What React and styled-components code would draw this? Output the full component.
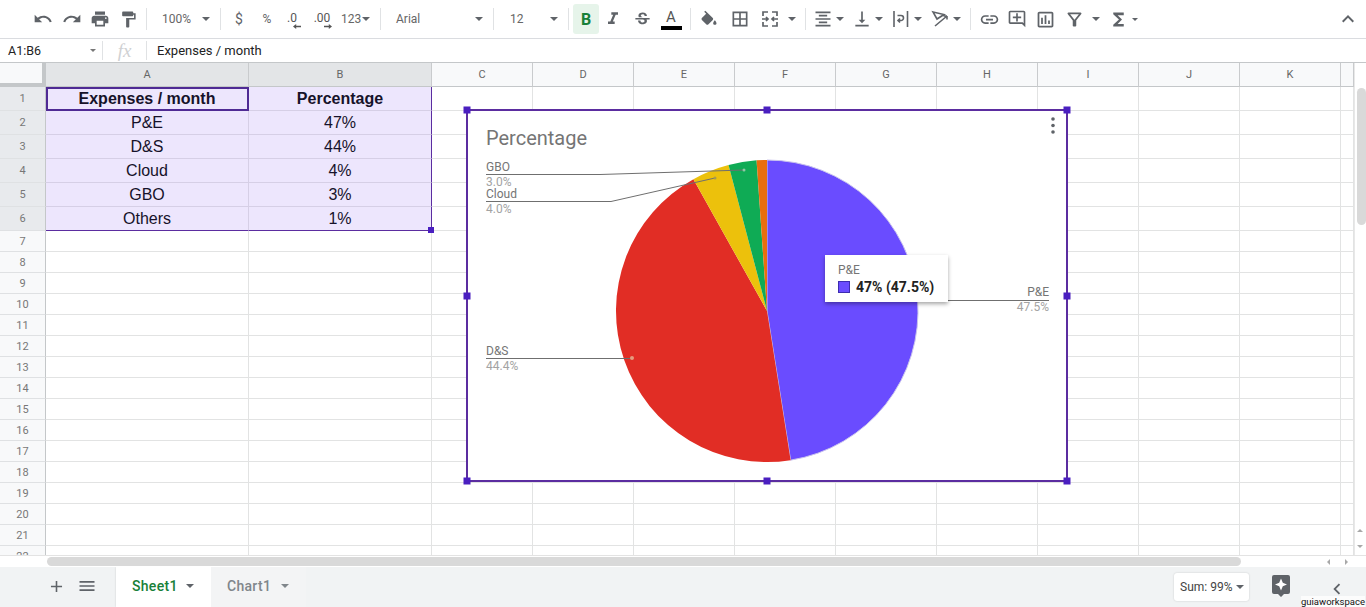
import React from 'react';
import styled, { createGlobalStyle } from 'styled-components';
import {
  MdUndo, MdRedo, MdPrint, MdFormatPaint, MdFormatItalic, MdStrikethroughS,
  MdBorderAll, MdFormatAlignCenter, MdVerticalAlignBottom,
  MdInsertLink, MdOutlineAddComment, MdOutlineInsertChart, MdOutlineFilterAlt,
  MdFunctions, MdExpandLess, MdAdd, MdMenu, MdChevronLeft,
} from 'react-icons/md';

const GlobalStyle = createGlobalStyle`
  html, body {
    margin: 0;
    padding: 0;
    overflow: hidden;
    background: #fff;
    font-family: Roboto, "Liberation Sans", sans-serif;
  }
`;

const Page = styled.div`
  width: 1366px;
  height: 607px;
  display: flex;
  flex-direction: column;
  position: relative;
  overflow: hidden;
`;

/* toolbar */
const Toolbar = styled.div`
  height: 38px;
  flex: none;
  display: flex;
  align-items: center;
  padding: 0 4px 0 29px;
  border-bottom: 1px solid #dadce0;
  color: #5f6368;
`;

const ToolButton = styled.div`
  width: ${p => p.$w || 28}px;
  height: ${p => (p.$active ? 30 : 24)}px;
  flex: none;
  display: flex;
  flex-direction: column;
  align-items: center;
  justify-content: center;
  font-size: ${p => p.$fs || 12}px;
  color: #5f6368;
  background: ${p => (p.$active ? '#e6f4ea' : 'transparent')};
  border-radius: 3px;
  margin-left: ${p => p.$ml || 0}px;
`;

const Sep = styled.div`
  width: 1px;
  height: 22px;
  flex: none;
  margin: 0 4px;
  background: #e0e2e4;
`;

const Select = styled.div`
  width: ${p => p.$w}px;
  padding-left: ${p => p.$pl}px;
  padding-right: 6px;
  box-sizing: border-box;
  flex: none;
  display: flex;
  align-items: center;
  justify-content: space-between;
  font-size: 12px;
  color: #666;
`;

const Caret = styled.span`
  width: 0;
  height: 0;
  flex: none;
  border-left: ${p => p.$size || 4}px solid transparent;
  border-right: ${p => p.$size || 4}px solid transparent;
  border-top: ${p => p.$size || 4}px solid ${p => p.$color || '#5f6368'};
`;

const CaretBox = styled.div`
  width: ${p => p.$w || 8}px;
  flex: none;
  display: flex;
  justify-content: center;
`;

const IconGroup = styled.div`
  display: flex;
  align-items: center;
  gap: 5px;
  flex: none;
  padding-right: 5px;
`;

const Pair = styled.div`
  display: flex;
  align-items: center;
`;

const BoldMark = styled.span`
  font-family: Roboto, sans-serif;
  font-weight: 700;
  font-size: 16px;
  color: #188038;
`;

const TextColor = styled.div`
  font-size: 15px;
  line-height: 16px;
  color: #555;
  display: flex;
  flex-direction: column;
  align-items: center;
  margin-right: 2px;
  &::after {
    content: '';
    width: 21px;
    height: 4px;
    margin-top: 1px;
    background: #000;
  }
`;

const Decimal = styled.div`
  font-size: 12px;
  line-height: 11px;
  margin-top: 4px;
  color: #555;
  display: flex;
  flex-direction: column;
  align-items: center;
`;

const ArrowSvg = styled.svg`
  display: block;
  transform: translateX(${p => p.$shift}px);
`;

const Spacer = styled.div`
  flex: 1;
`;

/* formula bar */
const FormulaBar = styled.div`
  height: 24px;
  flex: none;
  display: flex;
  align-items: center;
  border-bottom: 1px solid #c4c7c9;
  box-sizing: border-box;
  font-size: 12.5px;
  color: #222;
`;

const NameBox = styled.div`
  width: 102px;
  padding: 0 6px 0 8px;
  box-sizing: border-box;
  display: flex;
  align-items: center;
  justify-content: space-between;
`;

const BarSep = styled.div`
  width: 1px;
  height: 19px;
  background: #e0e2e4;
`;

const FxMark = styled.div`
  width: 43px;
  text-align: center;
  font-family: "Liberation Serif", serif;
  font-style: italic;
  font-size: 19px;
  color: #cfd1d3;
`;

const FormulaText = styled.div`
  padding-left: 10px;
  font-size: 13px;
`;

/* sheet */
const SheetArea = styled.div`
  flex: none;
  height: 492px;
  position: relative;
  display: flex;
  overflow: hidden;
`;

const Grid = styled.div`
  flex: none;
  width: 1354px;
  display: grid;
  grid-template-columns: 46px 203px 183px repeat(9, 101px) 13px;
  grid-auto-rows: min-content;
  align-content: start;
`;

const Corner = styled.div`
  height: 24px;
  box-sizing: border-box;
  background: #f8f9fa;
  border-right: 4px solid #c4c7c9;
  border-bottom: 4px solid #c4c7c9;
`;

const ColHead = styled.div`
  height: 24px;
  box-sizing: border-box;
  display: flex;
  align-items: center;
  justify-content: center;
  font-size: 11px;
  color: #666;
  background: ${p => (p.$selected ? '#e3e5e7' : '#f8f9fa')};
  border-right: 1px solid #c9cbcd;
  border-bottom: 1px solid #c4c7c9;
`;

const RowHead = styled.div`
  height: ${p => p.$h}px;
  box-sizing: border-box;
  display: flex;
  align-items: center;
  justify-content: center;
  font-size: 11px;
  color: #777;
  background: ${p => (p.$selected ? '#e8eaed' : '#f8f9fa')};
  border-right: 1px solid #c4c7c9;
  border-bottom: 1px solid #dfe1e3;
`;

const Cell = styled.div`
  height: ${p => p.$h}px;
  box-sizing: border-box;
  display: flex;
  align-items: center;
  justify-content: center;
  font-family: "Liberation Sans", Arial, sans-serif;
  font-size: 16px;
  font-weight: ${p => (p.$bold ? 700 : 400)};
  color: #16122a;
  background: ${p => (p.$selected ? '#ede6fd' : '#fff')};
  border-right: ${p => (p.$edge ? '1.5px solid #5b2da0' : `1px solid ${p.$selected ? '#d6cfe6' : '#e2e3e3'}`)};
  border-bottom: ${p => (p.$last ? '1.5px solid #5b2da0' : `1px solid ${p.$selected ? '#d6cfe6' : '#e2e3e3'}`)};
  outline: ${p => (p.$active ? '2px solid #4f2a94' : 'none')};
  outline-offset: -2px;
`;

const FillHandle = styled.div`
  position: absolute;
  left: 428px;
  top: 164px;
  width: 6px;
  height: 6px;
  background: #4a1fc0;
`;

const VScroll = styled.div`
  flex: 1;
  position: relative;
  border-left: 1px solid #e8e8e8;
  background: #fff;
`;

const VThumb = styled.div`
  position: absolute;
  top: 25px;
  left: 2px;
  width: 9px;
  height: 137px;
  border-radius: 5px;
  background: #d9d9d9;
`;

const ScrollArrow = styled.div`
  position: absolute;
  left: ${p => p.$x}px;
  top: ${p => p.$y}px;
  width: 0;
  height: 0;
  border: 3.5px solid transparent;
  ${p => p.$dir === 'up' && 'border-bottom-color: #a8a8a8; border-top-width: 0;'}
  ${p => p.$dir === 'down' && 'border-top-color: #a8a8a8; border-bottom-width: 0;'}
  ${p => p.$dir === 'left' && 'border-right-color: #a8a8a8; border-left-width: 0;'}
  ${p => p.$dir === 'right' && 'border-left-color: #a8a8a8; border-right-width: 0;'}
`;

/* chart, floating over the sheet */
const ChartBox = styled.div`
  position: absolute;
  left: 466px;
  top: 46px;
  width: 602px;
  height: 373px;
  box-sizing: border-box;
  background: #fff;
  border: 2px solid #5b2da0;
`;

const ChartSvg = styled.svg`
  display: block;
  width: 598px;
  height: 369px;
  font-family: Roboto, sans-serif;
`;

const Handle = styled.div`
  position: absolute;
  left: calc(${p => p.$x}% + ${p => p.$x / 50 - 1}px);
  top: calc(${p => p.$y}% + ${p => p.$y / 50 - 1}px);
  width: 7px;
  height: 7px;
  transform: translate(-50%, -50%);
  background: #4a1fc0;
`;

const Tooltip = styled.div`
  position: absolute;
  left: 357px;
  top: 144px;
  width: 123px;
  height: 47px;
  box-sizing: border-box;
  padding: 8px 13px;
  background: #fff;
  box-shadow: 0 2px 4px rgba(0, 0, 0, 0.35);
`;

const TipName = styled.div`
  font-size: 12px;
  line-height: 14px;
  color: #757575;
`;

const TipValue = styled.div`
  display: flex;
  align-items: center;
  gap: 6px;
  margin-top: 2px;
  font-size: 14px;
  line-height: 16px;
  font-weight: 700;
  color: #222;
`;

const TipSwatch = styled.span`
  width: 12px;
  height: 12px;
  box-sizing: border-box;
  border: 1px solid #3d2db0;
  background: ${p => p.$color};
`;

/* horizontal scrollbar */
const HScroll = styled.div`
  height: 12px;
  flex: none;
  position: relative;
  background: #fff;
  border-top: 1px solid #e3e3e3;
  box-sizing: border-box;
`;

const HThumb = styled.div`
  position: absolute;
  left: 47px;
  top: 1px;
  width: 1194px;
  height: 9px;
  border-radius: 5px;
  background: #d9d9d9;
`;

/* tabs */
const TabBar = styled.div`
  flex: 1;
  display: flex;
  align-items: stretch;
  background: #f1f3f4;
  color: #5f6368;
`;

const BarIcon = styled.div`
  width: ${p => p.$w}px;
  flex: none;
  box-sizing: border-box;
  padding: ${p => p.$pt || 0}px 0 ${p => p.$pb || 0}px;
  display: flex;
  align-items: center;
  justify-content: center;
`;

const Tab = styled.div`
  width: 95px;
  flex: none;
  box-sizing: border-box;
  display: flex;
  align-items: center;
  justify-content: space-between;
  padding: 0 17px 2px 16px;
  font-size: 14px;
  font-weight: 500;
  letter-spacing: 0.3px;
  color: ${p => (p.$active ? '#188038' : '#80868b')};
  background: ${p => (p.$active ? '#fff' : '#f3f4f5')};
  box-shadow: ${p => (p.$active ? '0 0 2px rgba(0,0,0,0.15)' : 'none')};
`;

const SumBox = styled.div`
  width: 75px;
  height: 28px;
  flex: none;
  align-self: center;
  margin-left: 868px;
  margin-bottom: 1px;
  box-sizing: border-box;
  display: flex;
  align-items: center;
  justify-content: space-between;
  padding: 0 5px 0 6px;
  font-size: 12px;
  color: #444;
  background: #fff;
  border-radius: 3px;
  box-shadow: 0 0 2px rgba(0, 0, 0, 0.18);
`;

const Watermark = styled.div`
  position: absolute;
  right: 1px;
  bottom: 0;
  font-size: 9.5px;
  line-height: 11px;
  color: #111;
  background: rgba(255, 255, 255, 0.75);
`;

const SLICES = [
  { name: 'P&E', value: 47.5, color: '#6a4cff' },
  { name: 'D&S', value: 44.4, color: '#e12d25' },
  { name: 'Cloud', value: 4, color: '#ecc10c' },
  { name: 'GBO', value: 3, color: '#0fab55' },
  { name: 'Others', value: 1.1, color: '#e96e0e' },
];

const TABLE = [
  ['Expenses / month', 'Percentage'],
  ['P&E', '47%'],
  ['D&S', '44%'],
  ['Cloud', '4%'],
  ['GBO', '3%'],
  ['Others', '1%'],
];

const COLS = ['A', 'B', 'C', 'D', 'E', 'F', 'G', 'H', 'I', 'J', 'K'];
const ROW_HEIGHTS = [24, 24, 24, 24, 24, 24, 21, 21, 21, 21, 21, 21, 21, 21, 21, 21, 21, 21, 21, 21, 21, 21];
const HANDLES = [[0, 0], [50, 0], [100, 0], [0, 50], [100, 50], [0, 100], [50, 100], [100, 100]];

const CX = 767;
const CY = 311;
const R = 151;

const polar = (turn) => {
  const a = turn * 2 * Math.PI;
  return [CX + R * Math.sin(a), CY - R * Math.cos(a)];
};

const PieSlices = () => {
  const total = SLICES.reduce((acc, s) => acc + s.value, 0);
  let start = 0;
  return SLICES.map((s) => {
    const end = start + s.value / total;
    const [x1, y1] = polar(start);
    const [x2, y2] = polar(end);
    const large = end - start > 0.5 ? 1 : 0;
    start = end;
    return (
      <path
        key={s.name}
        d={`M${CX} ${CY}L${x1} ${y1}A${R} ${R} 0 ${large} 1 ${x2} ${y2}Z`}
        fill={s.color}
        stroke={s.name === 'P&E' ? '#c9c3ee' : 'none'}
        strokeWidth="1"
      />
    );
  });
};

const Label = ({ x, y, name, pct, anchor = 'start' }) => (
  <g textAnchor={anchor} fontSize="12">
    <text x={x} y={y} fill="#757575">{name}</text>
    <text x={x} y={y + 15} fill="#a3a3a3">{pct}</text>
  </g>
);

const FillIcon = () => (
  <svg width="20" height="20" viewBox="0 0 24 20" fill="currentColor">
    <path d="M16.560 8.940L7.620 0 6.210 1.410l2.380 2.380-5.150 5.150c-.59.59-.59 1.540 0 2.120l5.500 5.500c.29.29.68.44 1.060.44s.77-.15 1.060-.44l5.500-5.500c.59-.58.59-1.530 0-2.120zM19 11.500s-2 2.170-2 3.500c0 1.100.9 2 2 2s2-.9 2-2c0-1.330-2-3.500-2-3.500z" />
  </svg>
);

const MergeIcon = () => (
  <svg width="20" height="20" viewBox="0 0 20 20" fill="none" stroke="currentColor" strokeWidth="1.7">
    <path d="M3 7V3h5M12 3h5v4M3 13v4h5M12 17h5v-4M2 10h5M18 10h-5M6 8l2 2-2 2M14 8l-2 2 2 2" />
  </svg>
);

const WrapIcon = () => (
  <svg width="18" height="18" viewBox="0 0 18 18" fill="none" stroke="currentColor" strokeWidth="1.6">
    <path d="M2 1v16M15.500 1v16M5.500 5.500h3.500a2.500 2.500 0 0 1 0 5H6.500M8 8.500l-2 2 2 2" />
  </svg>
);

const RotateIcon = () => (
  <svg width="20" height="20" viewBox="0 0 20 20" fill="none" stroke="currentColor" strokeWidth="1.6">
    <path d="M3 3l11 2.500-7 4.500zM5 17 17 7M17 7h-3.500M17 7v3.500" />
  </svg>
);

const ExploreIcon = () => (
  <svg width="18" height="22" viewBox="0 0 18 22">
    <path d="M2 0h14a2 2 0 0 1 2 2v15a2 2 0 0 1-2 2h-4l-3 3-3-3H2a2 2 0 0 1-2-2V2a2 2 0 0 1 2-2z" fill="#5f6368" />
    <path d="M9 3.500 10.800 7.700 15 9.500l-4.200 1.800L9 15.500l-1.800-4.200L3 9.500l4.200-1.800z" fill="#fff" />
  </svg>
);

const SmallArrow = ({ dir, shift }) => (
  <ArrowSvg $shift={shift} width="8" height="5" viewBox="0 0 10 6" fill="currentColor">
    <path d={dir === 'left' ? 'M0 3l4-3v2h6v2H4v2z' : 'M10 3L6 0v2H0v2h6v2z'} />
  </ArrowSvg>
);

const App = () => (
  <Page>
    <GlobalStyle />
    <Toolbar>
      <ToolButton><MdUndo size={20} /></ToolButton>
      <ToolButton $w={29}><MdRedo size={20} /></ToolButton>
      <ToolButton><MdPrint size={20} /></ToolButton>
      <ToolButton><MdFormatPaint size={19} /></ToolButton>
      <Sep />
      <Select $w={65} $pl={11}>100%<Caret /></Select>
      <Sep />
      <ToolButton $fs={14}>$</ToolButton>
      <ToolButton>%</ToolButton>
      <ToolButton $w={22}><Decimal>.0<SmallArrow dir="left" shift={5} /></Decimal></ToolButton>
      <ToolButton $w={38}><Decimal>.00<SmallArrow dir="right" shift={6} /></Decimal></ToolButton>
      <Select $w={35} $pl={0}>123<Caret /></Select>
      <Sep />
      <Select $w={104} $pl={11}>Arial<Caret /></Select>
      <Sep />
      <Select $w={66} $pl={12}>12<Caret /></Select>
      <Sep />
      <ToolButton $w={26} $active><BoldMark>B</BoldMark></ToolButton>
      <ToolButton $w={27}><MdFormatItalic size={20} /></ToolButton>
      <ToolButton $w={32}><MdStrikethroughS size={19} /></ToolButton>
      <ToolButton><TextColor>A</TextColor></ToolButton>
      <Sep />
      <ToolButton><FillIcon /></ToolButton>
      <ToolButton $w={34}><MdBorderAll size={20} /></ToolButton>
      <ToolButton $w={26}><MergeIcon /></ToolButton>
      <CaretBox $w={18}><Caret /></CaretBox>
      <Sep />
      <IconGroup>
        <Pair>
          <ToolButton $w={26}><MdFormatAlignCenter size={20} /></ToolButton>
          <CaretBox><Caret /></CaretBox>
        </Pair>
        <Pair>
          <ToolButton $w={26}><MdVerticalAlignBottom size={20} /></ToolButton>
          <CaretBox><Caret /></CaretBox>
        </Pair>
        <Pair>
          <ToolButton $w={26}><WrapIcon /></ToolButton>
          <CaretBox><Caret /></CaretBox>
        </Pair>
        <Pair>
          <ToolButton $w={26}><RotateIcon /></ToolButton>
          <CaretBox><Caret /></CaretBox>
        </Pair>
      </IconGroup>
      <Sep />
      <ToolButton><MdInsertLink size={21} /></ToolButton>
      <ToolButton><MdOutlineAddComment size={20} /></ToolButton>
      <ToolButton><MdOutlineInsertChart size={21} /></ToolButton>
      <ToolButton $w={30}><MdOutlineFilterAlt size={21} /></ToolButton>
      <CaretBox $w={14}><Caret /></CaretBox>
      <ToolButton $w={26} $ml={2}><MdFunctions size={21} /></ToolButton>
      <CaretBox><Caret $size={3} /></CaretBox>
      <Spacer />
      <ToolButton><MdExpandLess size={24} /></ToolButton>
    </Toolbar>

    <FormulaBar>
      <NameBox>A1:B6<Caret $size={3} $color="#777" /></NameBox>
      <BarSep />
      <FxMark>fx</FxMark>
      <BarSep />
      <FormulaText>Expenses / month</FormulaText>
    </FormulaBar>

    <SheetArea>
      <Grid>
        <Corner />
        {COLS.map((c, i) => <ColHead key={c} $selected={i < 2}>{c}</ColHead>)}
        <ColHead />
        {ROW_HEIGHTS.map((h, r) => (
          <React.Fragment key={r}>
            <RowHead $h={h} $selected={r < 6}>{r + 1}</RowHead>
            {COLS.map((c, i) => {
              const inRange = r < 6 && i < 2;
              return (
                <Cell
                  key={c}
                  $h={h}
                  $selected={inRange}
                  $bold={inRange && r === 0}
                  $active={r === 0 && i === 0}
                  $edge={r < 6 && i === 1}
                  $last={r === 5 && i < 2}
                >
                  {inRange ? TABLE[r][i] : null}
                </Cell>
              );
            })}
            <Cell $h={h} />
          </React.Fragment>
        ))}
      </Grid>
      <VScroll>
        <VThumb />
        <ScrollArrow $dir="up" $x={2} $y={466} />
        <ScrollArrow $dir="down" $x={2} $y={482} />
      </VScroll>
      <FillHandle />
      <ChartBox>
        <ChartSvg viewBox="468 111 598 369">
          <text x="486" y="145" fontSize="20" fill="#757575">Percentage</text>
          <g fill="#5f6368">
            <circle cx="1053" cy="119" r="1.8" />
            <circle cx="1053" cy="125.5" r="1.8" />
            <circle cx="1053" cy="132" r="1.8" />
          </g>
          <PieSlices />
          <g fill="none" stroke="#6f6f6f" strokeWidth="1">
            <path d="M486 174.5H600L744 170" />
            <path d="M486 201.5H611L715 178" />
            <path d="M486 358.5H632" />
            <path d="M918 300.5H1049" />
          </g>
          <circle cx="744" cy="170" r="1.5" fill="#8fc9a5" />
          <circle cx="715" cy="178" r="1.5" fill="#a59a50" />
          <circle cx="632" cy="358" r="2" fill="#e59b7e" />
          <Label x={486} y={171} name="GBO" pct="3.0%" />
          <Label x={486} y={198} name="Cloud" pct="4.0%" />
          <Label x={486} y={355} name="D&S" pct="44.4%" />
          <Label x={1049} y={296} name="P&E" pct="47.5%" anchor="end" />
        </ChartSvg>
        <Tooltip>
          <TipName>P&E</TipName>
          <TipValue><TipSwatch $color="#6a4cff" />47% (47.5%)</TipValue>
        </Tooltip>
        {HANDLES.map(([x, y]) => <Handle key={`${x}-${y}`} $x={x} $y={y} />)}
      </ChartBox>
    </SheetArea>

    <HScroll>
      <HThumb />
      <ScrollArrow $dir="left" $x={1327} $y={3} />
      <ScrollArrow $dir="right" $x={1345} $y={3} />
    </HScroll>

    <TabBar>
      <BarIcon $w={41} />
      <BarIcon $w={30} $pb={2}><MdAdd size={19} /></BarIcon>
      <BarIcon $w={32} $pb={2}><MdMenu size={20} /></BarIcon>
      <BarIcon $w={13} />
      <Tab $active>Sheet1<Caret /></Tab>
      <Tab>Chart1<Caret $color="#80868b" /></Tab>
      <SumBox>Sum: 99%<Caret /></SumBox>
      <BarIcon $w={64} $pb={2}><ExploreIcon /></BarIcon>
      <BarIcon $w={48} $pt={4}><MdChevronLeft size={22} /></BarIcon>
    </TabBar>
    <Watermark>guiaworkspace</Watermark>
  </Page>
);

export default App;
